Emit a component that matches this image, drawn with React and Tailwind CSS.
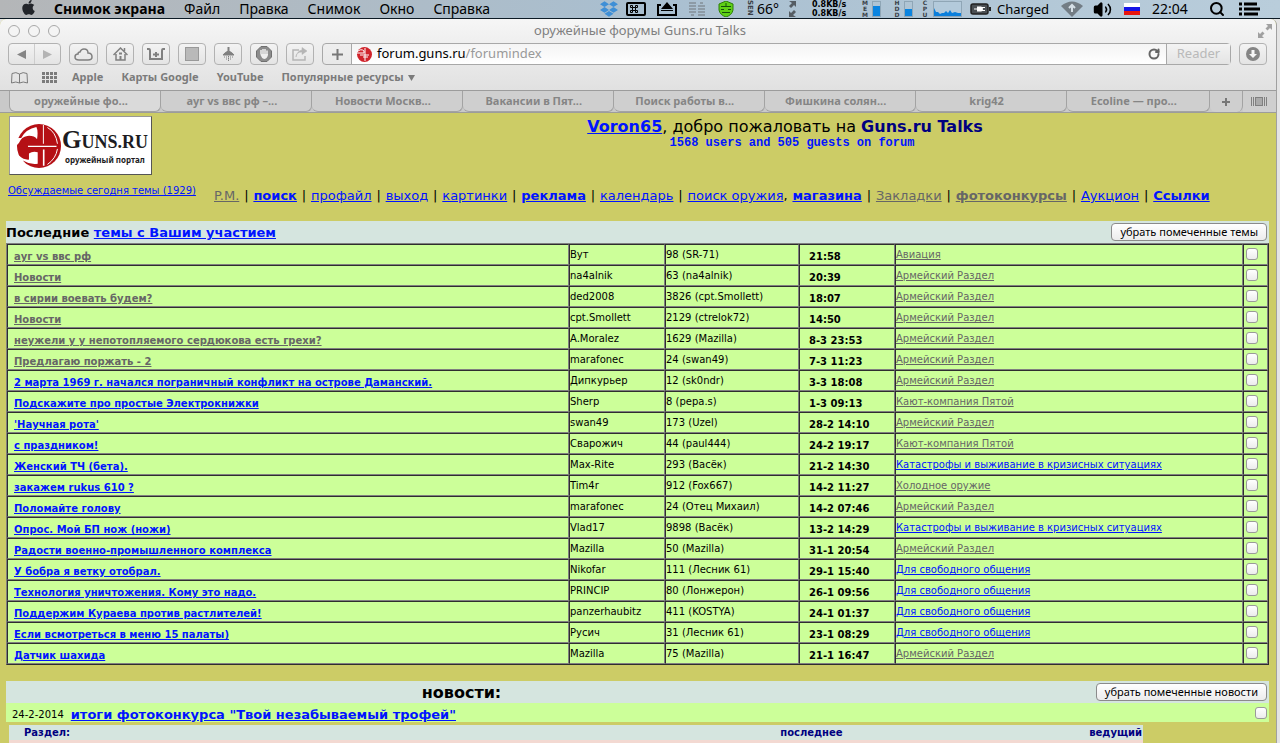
import React from 'react';
import { Volume2, Search, RotateCw } from 'lucide-react';
import { FaApple, FaDropbox } from 'react-icons/fa';

const MENUS = ['Файл', 'Правка', 'Снимок', 'Окно', 'Справка'];

const BOOKMARKS = ['Apple', 'Карты Google', 'YouTube'];

const TABS = [
  'оружейные фо...',
  'ауг vs ввс рф –...',
  'Новости Москв...',
  'Вакансии в Пят...',
  'Поиск работы в...',
  'Фишкина солян...',
  'krig42',
  'Ecoline — про...',
];

const NAV = [
  { label: 'P.M.', seen: true },
  { label: 'поиск', bold: true },
  { label: 'профайл' },
  { label: 'выход' },
  { label: 'картинки' },
  { label: 'реклама', bold: true },
  { label: 'календарь' },
  { label: 'поиск оружия', comma: true },
  { label: 'магазина', bold: true },
  { label: 'Закладки', seen: true },
  { label: 'фотоконкурсы', bold: true, seen: true },
  { label: 'Аукцион' },
  { label: 'Ссылки', bold: true },
];

const ARMY = 'Армейский Раздел';
const FREE = 'Для свободного общения';
const CRISIS = 'Катастрофы и выживание в кризисных ситуациях';

// title, author, replies, time, section, title visited, section visited
const TOPICS = [
  ['ауг vs ввс рф', 'Вут', '98 (SR-71)', '21:58', 'Авиация', true, true],
  ['Новости', 'na4alnik', '63 (na4alnik)', '20:39', ARMY, true, true],
  ['в сирии воевать будем?', 'ded2008', '3826 (cpt.Smollett)', '18:07', ARMY, true, true],
  ['Новости', 'cpt.Smollett', '2129 (ctrelok72)', '14:50', ARMY, true, true],
  ['неужели у у непотопляемого сердюкова есть грехи?', 'A.Moralez', '1629 (Mazilla)', '8-3 23:53', ARMY, true, true],
  ['Предлагаю поржать - 2', 'marafonec', '24 (swan49)', '7-3 11:23', ARMY, true, true],
  ['2 марта 1969 г. начался пограничный конфликт на острове Даманский.', 'Дипкурьер', '12 (sk0ndr)', '3-3 18:08', ARMY, false, true],
  ['Подскажите про простые Электрокнижки', 'Sherp', '8 (pepa.s)', '1-3 09:13', 'Кают-компания Пятой', false, true],
  ["'Научная рота'", 'swan49', '173 (Uzel)', '28-2 14:10', ARMY, false, true],
  ['с праздником!', 'Сварожич', '44 (paul444)', '24-2 19:17', 'Кают-компания Пятой', false, true],
  ['Женский ТЧ (бета).', 'Max-Rite', '293 (Васёк)', '21-2 14:30', CRISIS, false, false],
  ['закажем rukus 610 ?', 'Tim4r', '912 (Fox667)', '14-2 11:27', 'Холодное оружие', false, true],
  ['Поломайте голову', 'marafonec', '24 (Отец Михаил)', '14-2 07:46', ARMY, false, true],
  ['Опрос. Мой БП нож (ножи)', 'Vlad17', '9898 (Васёк)', '13-2 14:29', CRISIS, false, false],
  ['Радости военно-промышленного комплекса', 'Mazilla', '50 (Mazilla)', '31-1 20:54', ARMY, false, true],
  ['У бобра я ветку отобрал.', 'Nikofar', '111 (Лесник 61)', '29-1 15:40', FREE, false, false],
  ['Технология уничтожения. Кому это надо.', 'PRINCIP', '80 (Лонжерон)', '26-1 09:56', FREE, false, false],
  ['Поддержим Кураева против растлителей!', 'panzerhaubitz', '411 (KOSTYA)', '24-1 01:37', FREE, false, false],
  ['Если всмотреться в меню 15 палаты)', 'Русич', '31 (Лесник 61)', '23-1 08:29', FREE, false, false],
  ['Датчик шахида', 'Mazilla', '75 (Mazilla)', '21-1 16:47', ARMY, false, true],
];

const GunsEmblem = ({ className }) => (
  <svg viewBox="16 20 140 142" className={className}>
    <circle cx="86" cy="91" r="68" fill="#b51015" />
    <g fill="#fff">
      <path d="M14 80 L22 66 H31 Q46 38 78 32 Q84 44 80 70 Q70 58 50 60 Q32 62 24 82 L14 92 Z" />
      <path d="M14 126 L26 122 Q38 134 55 133 V114 Q66 106 82 110 V146 Q60 150 36 136 L44 146 Q24 140 14 126 Z" />
      <path d="M98 26 H101 V84 H98 Z M98 102 H103 V152 H98 Z" />
      <path d="M52 90 H140 V94 H52 Z" />
    </g>
    <path d="M112 34 Q138 48 143 84 M143 100 Q138 130 112 148" stroke="#fff" strokeWidth="3" fill="none" />
  </svg>
);

const VerticalLabel = ({ text }) => (
  <span className="flex h-[18px] w-2 flex-col items-center font-['DejaVu_Sans',sans-serif] text-[6px] leading-[6px] font-bold text-[#3a4148]">
    {text.split('').map((letter, i) => (
      <span key={i}>{letter}</span>
    ))}
  </span>
);

const MenuBar = () => (
  <header className="flex h-[19px] items-center overflow-hidden border-b border-[#0c1a24] bg-linear-to-r from-[#b4b6b8] via-[#a9bfd0] to-[#b9cddb] pl-5 text-sm leading-[18px] whitespace-nowrap text-black">
    <FaApple size={17} className="mb-1 shrink-0 text-[#22252a]" />
    <span className="ml-[17px] font-bold">Снимок экрана</span>
    <nav className="ml-[19px] flex gap-[19px]">
      {MENUS.map((menu) => (
        <span key={menu}>{menu}</span>
      ))}
    </nav>
    <div className="ml-auto flex h-[18px] items-center pr-5">
      <span className="w-[26px]"><FaDropbox size={18} className="text-[#3f8fd6]" /></span>
      <span className="w-[31px]">
        <svg width="20" height="16" viewBox="0 0 20 16">
          <rect x="1" y="2" width="18" height="12" rx="1" fill="none" stroke="#000" strokeWidth="2" />
          <path d="M6.500 6.500 h3 v3 h-3 z M6.500 6.500 h-2 v-2 h2 z M9.500 6.500 v-2 h2 v2 z M6.500 9.500 v2 h-2 v-2 z M9.500 9.500 h2 v2 h-2 z" stroke="#000" strokeWidth="1" fill="none" />
        </svg>
      </span>
      <span className="w-8">
        <svg width="20" height="16" viewBox="0 0 20 16">
          <path d="M4 4 H1 V14 H19 V4 H16" fill="none" stroke="#000" strokeWidth="2" />
          <path d="M10 1 L16 8 H4 Z M4 9 h12 v1 h-12 z" fill="#000" />
        </svg>
      </span>
      <span className="w-[29px]">
        <svg width="17" height="16" viewBox="0 0 17 16" stroke="#8d9ba6" strokeWidth="2">
          <path d="M0 2h7 M0 5h7 M0 8h7 M0 11h7 M9 5h7 M9 8h7 M9 11h7 M9 14h7" />
          <path d="M2 14h3 M11 2h3" />
        </svg>
      </span>
      <span className="w-7">
        <svg width="16" height="16" viewBox="0 0 16 16">
          <path d="M8 0 L15 3 V9 Q14 14 8 16 Q2 14 1 9 V3 Z" fill="#5fd016" stroke="#2c7d08" />
          <path d="M3 5.500 h10 M3 8.500 h3 M10 8.500 h3 M4 11.500 h8 M8 2v3" stroke="#14500a" />
        </svg>
      </span>
      <span className="w-[11px]">
        <span className="block h-[18px] w-[7px] font-['DejaVu_Sans',sans-serif] text-[7px] leading-[7px] font-bold text-[#3a4148] [writing-mode:vertical-rl]">SEN</span>
      </span>
      <span className="w-[31px]">66°</span>
      <span className="w-6">
        <svg width="9" height="16" viewBox="0 0 9 16" fill="#555d64">
          <path d="M1 0 h7 v6 l-2 -2 l-3 3 l-2 -2 l3 -3 z M8 16 h-7 v-6 l2 2 l3 -3 l2 2 l-3 3 z" />
        </svg>
      </span>
      <span className="flex w-[49px] flex-col font-['DejaVu_Sans',sans-serif] text-[8px] leading-[9px] font-bold">
        <span>0.8KB/s</span>
        <span>0.8KB/s</span>
      </span>
      <span className="w-[11px]"><VerticalLabel text="MEM" /></span>
      <span className="flex h-4 w-[9px] flex-col justify-end border border-[#8fa6b6]">
        <span className="h-2.5 bg-[#0a84e0]" />
      </span>
      <span className="ml-3 w-[11px]"><VerticalLabel text="HDD" /></span>
      <span className="flex h-4 w-[9px] flex-col justify-end border border-[#8fa6b6]">
        <span className="h-[7px] bg-[#0a84e0]" />
      </span>
      <span className="ml-2 w-3"><VerticalLabel text="CPU" /></span>
      <svg width="29" height="16" viewBox="0 0 29 16">
        <rect x="0.500" y="0.500" width="28" height="15" fill="#b3cadb" stroke="#8fa6b6" />
        <path d="M1 15 V7 L3 11 L5 11 L7 13 L9 12 L11 12 L13 10 L15 12 L17 9 L19 12 L22 11 L25 12 L28 12 V15 Z" fill="#0a7fdc" />
      </svg>
      <svg width="21" height="12" viewBox="0 0 21 12" className="ml-2">
        <rect x="1" y="1" width="17" height="10" rx="2" fill="#4a4f53" stroke="#222" strokeWidth="1.500" />
        <path d="M4 6 h3 M12 4.500 h3 M12 7.500 h3" stroke="#fff" />
        <path d="M7 3.500 h4 q2 0 2 2.500 t-2 2.500 h-4 z" fill="#fff" />
        <rect x="19" y="4" width="2" height="4" fill="#222" />
      </svg>
      <span className="ml-1.5 w-16 text-[13px]">Charged</span>
      <svg width="22" height="16" viewBox="0 0 22 16" className="shrink-0">
        <path d="M0 5 Q11 -4 22 5 L11 16 Z" fill="#737d85" />
        <path d="M11 11 V4 M8 7 L11 4 L14 7" stroke="#d6e0e7" strokeWidth="2" fill="none" />
      </svg>
      <Volume2 size={19} className="ml-2.5 fill-black [&_path:nth-child(n+2)]:fill-none" />
      <svg width="16" height="12" viewBox="0 0 16 12" className="ml-3">
        <rect width="16" height="4" fill="#fff" />
        <rect y="4" width="16" height="4" fill="#1414e6" />
        <rect y="8" width="16" height="4" fill="#e8150d" />
      </svg>
      <span className="ml-3 w-[57px]">22:04</span>
      <Search size={16} strokeWidth={3} />
      <svg width="21" height="14" viewBox="0 0 21 14" className="ml-3.5">
        <path d="M0 2h3 M0 7h3 M0 12h3 M5 2h13 M5 7h16 M5 12h14" stroke="#000" strokeWidth="3" />
      </svg>
    </div>
  </header>
);

const ToolButton = ({ label, className = 'w-7', children }) => (
  <button
    aria-label={label}
    className={`flex h-[22px] shrink-0 items-center justify-center rounded border border-[#b2b2b2] bg-linear-to-b from-[#f3f3f3] to-[#e4e4e4] text-[#808080] ${className}`}
  >
    {children}
  </button>
);

const Toolbar = () => (
  <div className="flex items-center pr-[9px] pl-2">
    <div className="flex h-[22px] w-[53px] shrink-0 rounded border border-[#b2b2b2] bg-linear-to-b from-[#f3f3f3] to-[#e4e4e4]">
      <button aria-label="Назад" className="flex flex-1 items-center justify-center border-r border-[#cdcdcd]">
        <svg width="9" height="9" viewBox="0 0 9 9"><path d="M0 4.500 L9 0 V9 Z" fill="#858585" /></svg>
      </button>
      <button aria-label="Вперёд" className="flex flex-1 items-center justify-center">
        <svg width="9" height="9" viewBox="0 0 9 9"><path d="M9 4.500 L0 0 V9 Z" fill="#b4b4b4" /></svg>
      </button>
    </div>
    <div className="ml-2 flex gap-2">
      <ToolButton label="iCloud" className="w-[29px]">
        <svg width="19" height="13" viewBox="0 0 19 13" fill="none" stroke="currentColor" strokeWidth="1.500">
          <path d="M5 12 Q1 12 1 9 Q1 6 4 6 Q4 4 6 4 Q7 1 10 1 Q14 1 14 5 Q18 5 18 9 Q18 12 14 12 Z" />
        </svg>
      </ToolButton>
      <ToolButton label="Домой">
        <svg width="15" height="14" viewBox="0 0 15 14" fill="none" stroke="currentColor" strokeWidth="1.500">
          <path d="M0.500 8 L7.500 1 L14.500 8 M11.500 4 V1 M3 7 V13 H12 V7" />
          <path d="M7.500 13 V9 M6 6.500 H9" strokeWidth="2" />
        </svg>
      </ToolButton>
      <ToolButton label="Корзина">
        <svg width="18" height="12" viewBox="0 0 18 12" fill="none" stroke="currentColor" strokeWidth="2">
          <path d="M0 1 H2 Q3 1 3 3 V11 H15 V3 Q15 1 16 1 H18 M9 4 V9 M6 6.500 H12" />
        </svg>
      </ToolButton>
      <ToolButton label="Снимок">
        <span className="size-[14px] border border-[#999] bg-[#b9b9b9]" />
      </ToolButton>
      <ToolButton label="Лампа">
        <svg width="13" height="15" viewBox="0 0 13 15" fill="none" stroke="currentColor">
          <path d="M6.500 0 V4" strokeWidth="2" />
          <path d="M1 8 Q3 5 6.500 4 Q10 5 12 8 Z" fill="currentColor" />
          <path d="M2 10 h9 M4 12 h5 M6.500 9 v6" strokeDasharray="1 1" />
        </svg>
      </ToolButton>
      <ToolButton label="Блокировка">
        <svg width="16" height="16" viewBox="0 0 16 16">
          <path d="M5 0.500 H11 L15.500 5 V11 L11 15.500 H5 L0.500 11 V5 Z" fill="#8c8c8c" stroke="#707070" />
          <path d="M5 8 V4 M7 8 V3 M9 8 V3 M11 8 V4.500" stroke="#eee" strokeWidth="1.500" />
          <path d="M4.500 8 H12 V9 Q11 13 8 13 Q5.500 12 4.500 9 Z" fill="#eee" />
        </svg>
      </ToolButton>
      <ToolButton label="Поделиться">
        <svg width="16" height="14" viewBox="0 0 16 14" fill="none" stroke="#b5b5b5" strokeWidth="1.500">
          <path d="M7 3 H1 V13 H13 V9" />
          <path d="M4 10 Q4 5 10 5 V7.500 L15 4 L10 0.500 V3 Q5 4 4 10 Z" fill="#b5b5b5" strokeWidth="0.500" />
        </svg>
      </ToolButton>
    </div>
    <div className="ml-2 flex h-[22px] min-w-0 flex-1 rounded border border-[#a8a8a8]">
      <button aria-label="Добавить закладку" className="flex w-[29px] items-center justify-center border-r border-[#a8a8a8]">
        <svg width="11" height="11" viewBox="0 0 11 11"><path d="M5.500 0 V11 M0 5.500 H11" stroke="#777" strokeWidth="2" /></svg>
      </button>
      <div className="flex flex-1 items-center bg-linear-to-b from-[#f4f4f4] to-white pr-1.5 pl-[5px]">
        <svg width="15" height="15" viewBox="0 0 15 15">
          <circle cx="7.500" cy="7.500" r="7.500" fill="#d0232b" />
          <path d="M0 5 Q4 1 7 4 V6 H0 M8 1 V14 M3 8 H12 M6 10 H11" stroke="#fff" fill="none" />
        </svg>
        <a href="#" className="ml-[5px] flex-1 text-[13px] text-black">
          forum.guns.ru<span className="text-[#999]">/forumindex</span>
        </a>
        <RotateCw size={12} strokeWidth={4} className="text-[#666]" />
      </div>
      <button className="w-16 border-l border-[#a8a8a8] bg-linear-to-b from-[#f3f3f3] to-[#e4e4e4] text-[13px] text-[#b9b9b9]">Reader</button>
    </div>
    <ToolButton label="Загрузки" className="ml-2 w-7">
      <svg width="14" height="14" viewBox="0 0 14 14">
        <circle cx="7" cy="7" r="7" fill="#858585" />
        <path d="M5.500 3 h3 v4 h2.500 l-4 4 l-4 -4 h2.500 z" fill="#f5f5f5" />
      </svg>
    </ToolButton>
  </div>
);

const BrowserChrome = () => (
  <div className="bg-linear-to-b from-[#f6f6f6] to-[#dadada] text-[#808080]">
    <div className="flex h-6 items-center pr-1 pl-2">
      <div className="flex w-[70px] gap-2">
        <span className="size-3 rounded-full border border-[#a8a8a8] bg-[#f4f4f4]" />
        <span className="size-3 rounded-full border border-[#a8a8a8] bg-[#f4f4f4]" />
        <span className="size-3 rounded-full border border-[#a8a8a8] bg-[#f4f4f4]" />
      </div>
      <h1 className="flex-1 text-center text-[13px]">оружейные форумы Guns.ru Talks</h1>
      <div className="flex w-[70px] justify-end">
        <svg width="14" height="14" viewBox="0 0 14 14" fill="#a0a0a0">
          <path d="M8 0 h6 v6 l-2 -2 l-2.500 2.500 l-2 -2 l2.500 -2.500 z M6 14 h-6 v-6 l2 2 l2.500 -2.500 l2 2 l-2.500 2.500 z" />
        </svg>
      </div>
    </div>
    <Toolbar />
    <div className="flex h-[25px] items-center pl-[11px] text-[11px] font-bold text-[#7b7b7b]">
      <svg width="17" height="12" viewBox="0 0 17 12" fill="none" stroke="currentColor">
        <path d="M8.500 2 Q5 -0.500 1 1.500 L0.500 11 Q5 9 8.500 11 Q12 9 16.500 11 L16 1.500 Q12 -0.500 8.500 2 V11" />
      </svg>
      <svg width="15" height="11" viewBox="0 0 15 11" className="ml-3.5">
        <path d="M0 1.500h15 M0 5.500h15 M0 9.500h15" stroke="currentColor" strokeWidth="3" strokeDasharray="3 1" />
      </svg>
      <nav className="ml-[15px] flex gap-[18px]">
        {BOOKMARKS.map((name) => (
          <a key={name} href="#">{name}</a>
        ))}
        <a href="#" className="flex items-center gap-1">
          Популярные ресурсы
          <svg width="7" height="6" viewBox="0 0 7 6"><path d="M0 0 H7 L3.500 6 Z" fill="currentColor" /></svg>
        </a>
      </nav>
    </div>
    <div className="flex h-[23px] border-y border-[#9c9c9c] bg-[#c9c9c9] pl-[9px] text-[11px] font-bold text-[#858585]">
      {TABS.map((tab, i) => (
        <button
          key={tab}
          className={`truncate rounded-b-md border-r border-b border-[#a3a3a3] pr-2 ${
            i === TABS.length - 1 ? 'flex-[143]' : 'flex-[151]'
          } ${i === 0 ? 'border-l bg-[#dadada]' : 'bg-[#cfcfcf]'}`}
        >
          {tab}
        </button>
      ))}
      <button aria-label="Новая вкладка" className="flex w-[33px] items-center justify-center rounded-b-md border-r border-[#a3a3a3] bg-[#cfcfcf]">
        <svg width="8" height="8" viewBox="0 0 8 8"><path d="M4 0 V8 M0 4 H8" stroke="#777" strokeWidth="2" /></svg>
      </button>
      <button aria-label="Все вкладки" className="flex w-[33px] items-center justify-center bg-[#cfcfcf]">
        <svg width="16" height="9" viewBox="0 0 16 9">
          <path d="M0.500 0 V9 M2.500 0 V9 M13.500 0 V9 M15.500 0 V9" stroke="#808080" />
          <rect x="4.500" y="0.500" width="7" height="8" fill="#aaa" stroke="#808080" />
        </svg>
      </button>
    </div>
  </div>
);

const GrayButton = ({ children }) => (
  <button className="h-[18px] rounded border border-[#8b8b8b] bg-linear-to-b from-white to-[#ececec] px-2 font-['Noto_Sans','Open_Sans',sans-serif] text-[11px] leading-4 text-black">
    {children}
  </button>
);

const MarkBox = ({ label }) => (
  <input
    type="checkbox"
    aria-label={label}
    className="block size-3 appearance-none rounded-[3px] border border-[#9a9a9a] bg-linear-to-b from-white to-[#ececec]"
  />
);

const ForumHeader = () => (
  <div className="pt-[3px]">
    <div className="flex pl-[9px]">
      <a href="#" className="flex h-[59px] w-[143px] items-center border border-t-[#999] border-r-[#555] border-b-[#555] border-l-[#999] bg-white pl-1.5 text-[#1c1c22]">
        <GunsEmblem className="size-[46px] shrink-0" />
        <span className="flex flex-col items-center">
          <span className="font-['Liberation_Serif',serif] text-[25px] leading-[26px] font-bold">
            G<span className="text-[18px]">UNS.RU</span>
          </span>
          <span className="font-['Noto_Sans',sans-serif] text-[8px] leading-[10px] font-bold whitespace-nowrap">оружейный портал</span>
        </span>
      </a>
      <div className="flex-1 pt-px pl-[142px] text-center text-base leading-5">
        <p>
          <a href="#" className="font-bold text-[#0014ff] underline">Voron65</a>, добро пожаловать на{' '}
          <b className="text-[#000080]">Guns.ru Talks</b>
        </p>
        <p className="pl-3.5 font-['Liberation_Mono',monospace] text-xs leading-3 font-bold text-[#0014ff]">
          1568 users and 505 guests on forum
        </p>
      </div>
    </div>
    <div className="flex h-[46px] items-start pr-[66px] pl-2">
      <a href="#" className="mt-2 w-[206px] shrink-0 text-[10px] whitespace-nowrap text-[#0014ff] underline">
        Обсуждаемые сегодня темы (1929)
      </a>
      <nav className="mt-[11px] flex flex-1 items-center justify-between text-[13px] leading-5 whitespace-nowrap">
        {NAV.map((item, i) => (
          <React.Fragment key={item.label}>
            {i > 0 && !NAV[i - 1].comma && <span>|</span>}
            <span>
              <a
                href="#"
                className={`underline ${item.bold ? 'font-bold' : ''} ${item.seen ? 'text-[#666]' : 'text-[#0014ff]'}`}
              >
                {item.label}
              </a>
              {item.comma && ','}
            </span>
          </React.Fragment>
        ))}
      </nav>
    </div>
  </div>
);

const TopicsTable = () => (
  <section className="mr-[7px] ml-1.5">
    <div className="flex h-[22px] items-center justify-between bg-[#d5e5df] pr-0.5">
      <h2 className="pt-0.5 text-[13px] font-bold">
        Последние <a href="#" className="text-[#0014ff] underline">темы с Вашим участием</a>
      </h2>
      <GrayButton>убрать помеченные темы</GrayButton>
    </div>
    <table className="w-full table-fixed border-separate border-spacing-0 border border-t-[#808080] border-r-[#2e2e2e] border-b-[#2e2e2e] border-l-[#808080] bg-[#ccff99] text-[10px]">
      <colgroup>
        <col />
        <col className="w-24" />
        <col className="w-[134px]" />
        <col className="w-24" />
        <col className="w-[348px]" />
        <col className="w-[25px]" />
      </colgroup>
      <tbody className="[&_td]:h-[21px] [&_td]:overflow-hidden [&_td]:border [&_td]:border-t-[#2e2e2e] [&_td]:border-r-[#808080] [&_td]:border-b-[#808080] [&_td]:border-l-[#2e2e2e] [&_td]:p-0 [&_td]:align-top [&_td]:leading-[19px] [&_td]:whitespace-nowrap">
        {TOPICS.map(([title, author, replies, time, section, seen, sectionSeen], idx) => (
          <tr key={idx}>
            <td>
              <a href="#" className={`ml-1.5 block pt-[5px] leading-[14px] font-bold underline ${seen ? 'text-[#666]' : 'text-[#0014ff]'}`}>
                {title}
              </a>
            </td>
            <td>{author}</td>
            <td>{replies}</td>
            <td><span className="ml-[9px] block pt-[5px] leading-[14px] font-bold">{time}</span></td>
            <td>
              <a href="#" className={`underline ${sectionSeen ? 'text-[#666]' : 'text-[#0014ff]'}`}>{section}</a>
            </td>
            <td>
              <div className="pt-[3px] pl-0.5"><MarkBox label={title} /></div>
            </td>
          </tr>
        ))}
      </tbody>
    </table>
  </section>
);

const News = () => (
  <section className="mt-4 mr-[7px] ml-1.5">
    <div className="flex h-[22px] items-center bg-[#d5e5df] pr-0.5">
      <h2 className="flex-1 pt-0.5 text-center text-base font-bold">новости:</h2>
      <div className="flex w-[350px] justify-end"><GrayButton>убрать помеченные новости</GrayButton></div>
    </div>
    <div className="flex h-[19px] items-center bg-[#ccff99] pr-0.5 pl-1.5">
      <span className="pt-1 text-[10px] leading-[15px]">24-2-2014</span>
      <a href="#" className="ml-[7px] flex-1 pt-1 text-[13px] leading-[15px] font-bold text-[#0014ff] underline">
        итоги фотоконкурса "Твой незабываемый трофей"
      </a>
      <MarkBox label="итоги фотоконкурса" />
    </div>
  </section>
);

const Sections = () => (
  <section className="mt-[3px] mr-[133px] ml-[9px] flex-1 bg-[#f3d9d2]">
    <div className="flex h-[15px] items-center bg-[#d5e5df] pl-[15px] text-[10px] font-bold text-[#000080]">
      <span className="flex-1">Раздел:</span>
      <span className="w-[309px]">последнее</span>
      <span className="pr-px">ведущий</span>
    </div>
  </section>
);

const App = () => (
  <div className="flex h-screen flex-col overflow-hidden bg-[#e4e4e4] font-['Noto_Sans','Open_Sans',sans-serif]">
    <MenuBar />
    <main className="mr-[3px] flex min-h-0 flex-1 flex-col overflow-hidden rounded-t-md border-r border-[#a0a0a0] bg-[#cccc66]">
      <BrowserChrome />
      <div className="flex flex-1 flex-col font-['DejaVu_Sans',sans-serif] text-black">
        <ForumHeader />
        <TopicsTable />
        <News />
        <Sections />
      </div>
    </main>
  </div>
);

export default App;
